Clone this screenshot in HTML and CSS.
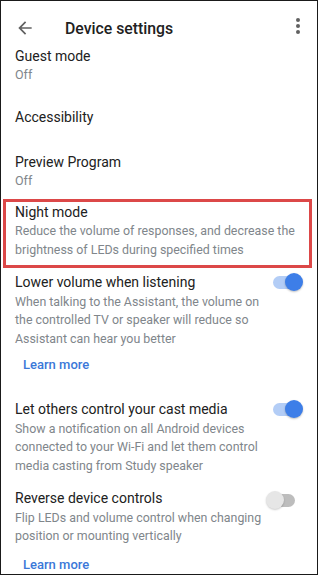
FILE: index.html
```html
<!DOCTYPE html>
<html>
<head>
<meta charset="utf-8">
<link rel="stylesheet" href="styles.css">
</head>
<body>
<div class="frame">
  <header class="bar">
    <svg class="back" width="20" height="20" viewBox="0 0 24 24"><path d="M20 11H7.83l5.59-5.59L12 4l-8 8 8 8 1.41-1.41L7.83 13H20v-2z" fill="#616161"/></svg>
    <h1 class="title">Device settings</h1>
    <svg class="more" width="6" height="18" viewBox="0 0 6 18"><circle cx="3" cy="3" r="2" fill="#616161"/><circle cx="3" cy="9" r="2" fill="#616161"/><circle cx="3" cy="15" r="2" fill="#616161"/></svg>
  </header>
  <div class="list">
    <div class="item guest">
      <div class="t">Guest mode</div>
      <div class="s">Off</div>
    </div>
    <div class="item access">
      <div class="t">Accessibility</div>
    </div>
    <div class="item preview">
      <div class="t">Preview Program</div>
      <div class="s">Off</div>
    </div>
    <div class="item night">
      <div class="t">Night mode</div>
      <div class="s">Reduce the volume of responses, and decrease the brightness of LEDs during specified times</div>
    </div>
    <div class="item row lower">
      <div class="txt">
        <div class="t">Lower volume when listening</div>
        <div class="s">When talking to the Assistant, the volume on the controlled TV or speaker will reduce so Assistant can hear you better</div>
        <div class="link">Learn more</div>
      </div>
      <span class="toggle on"><span class="thumb"></span></span>
    </div>
    <div class="item row cast">
      <div class="txt">
        <div class="t">Let others control your cast media</div>
        <div class="s">Show a notification on all Android devices connected to your Wi-Fi and let them control media casting from Study speaker</div>
      </div>
      <span class="toggle on"><span class="thumb"></span></span>
    </div>
    <div class="item row reverse">
      <div class="txt">
        <div class="t">Reverse device controls</div>
        <div class="s">Flip LEDs and volume control when changing position or mounting vertically</div>
        <div class="link">Learn more</div>
      </div>
      <span class="toggle off"><span class="thumb"></span></span>
    </div>
  </div>
</div>
</body>
</html>
```
FILE: styles.css
```css
html, body { margin: 0; padding: 0; background: #fff; }
body { font-family: Roboto, "Noto Sans", sans-serif; }
.frame {
  width: 318px;
  height: 575px;
  box-sizing: border-box;
  border: 1px solid #1a1a1a;
  overflow: hidden;
  background: #fff;
}
.bar {
  display: flex;
  align-items: center;
  height: 46px;
  padding: 8px 0 0 14px;
  box-sizing: border-box;
}
.back { flex: none; }
.title {
  margin: 0 0 0 30px;
  font-size: 15.8px;
  font-weight: 500;
  color: #212121;
  flex: 1;
}
.more { flex: none; margin-right: 16px; margin-top: -4px; }
.list { display: flex; flex-direction: column; }
.item { padding: 0 14px; }
.t { font-size: 14px; line-height: 19px; color: #212121; }
.s { font-size: 12.4px; line-height: 18.5px; color: #80868b; }
.guest { padding-top: 0; }
.guest .s, .preview .s { font-size: 12.5px; }
.access { padding-top: 23px; }
.preview { padding-top: 26px; }
.night {
  margin: 9px 5px 0 2px;
  border: 3px solid #dc4848;
  padding: 1px 0 6px 9px;
}
.lower { padding-top: 5px; }
.lower .s, .cast .s, .reverse .s { margin-top: 0.5px; }
.cast { padding-top: 26px; }
.reverse { padding-top: 14px; }
.row { display: flex; align-items: flex-start; gap: 4px; }
.txt { flex: 1; }
.link { font-size: 13px; color: #3b78d8; padding: 7px 0 0 8px; font-weight: 500; line-height: 19px; }
.reverse .link { padding-top: 9px; }
.toggle { position: relative; flex: none; width: 31px; height: 20px; margin-top: 0; }
.toggle::before {
  content: "";
  position: absolute;
  left: 1px; right: 5px; top: 3px;
  height: 13px;
  border-radius: 7px;
}
.toggle .thumb {
  position: absolute;
  top: 0;
  width: 18px; height: 18px;
  border-radius: 50%;
}
.toggle.on::before { background: #b3cdf6; }
.toggle.on .thumb { right: 0; background: #3d7ee8; box-shadow: 0 1px 2px rgba(0,0,0,0.25); }
.toggle.off::before { background: #bdbdbd; left: -4px; right: 8px; top: 5px; }
.toggle.off .thumb { left: -6px; top: 2px; background: #e6e6e6; box-shadow: 0 1px 2px rgba(0,0,0,0.2); }
```
